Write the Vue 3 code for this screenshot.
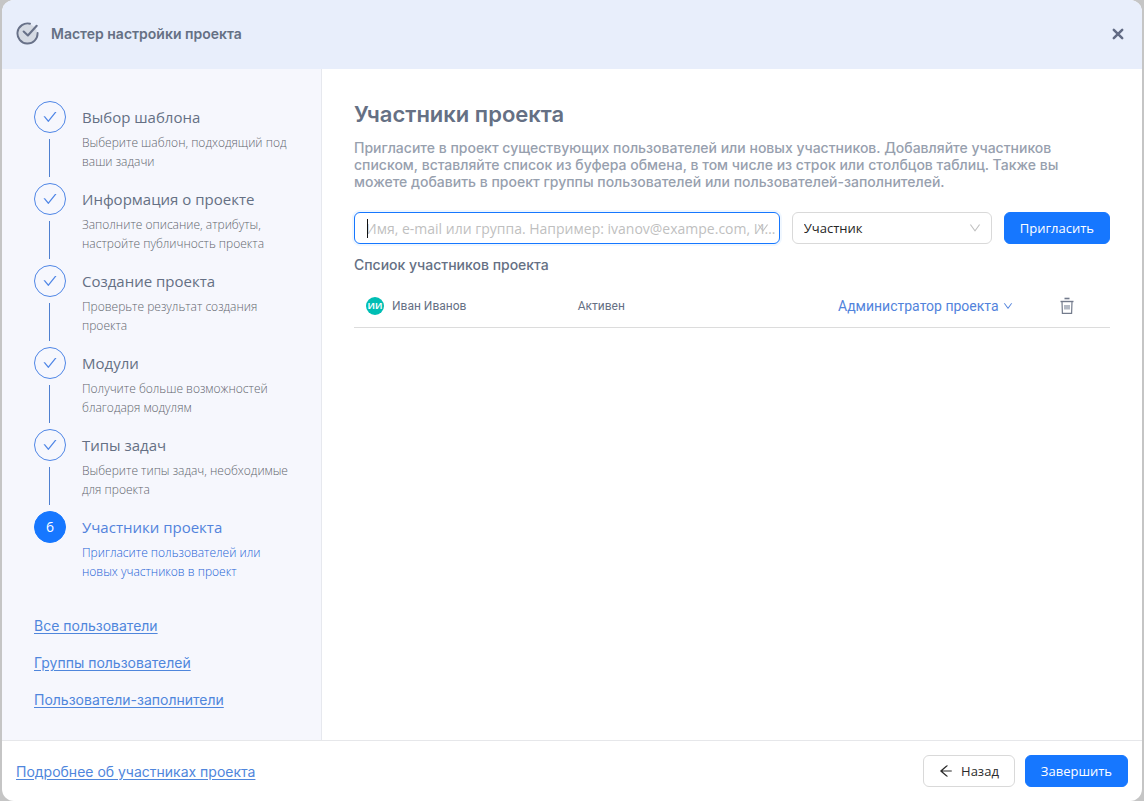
<script setup>
import { ref } from 'vue'

const steps = [
  { title: 'Выбор шаблона', text: 'Выберите шаблон, подходящий под ваши задачи' },
  { title: 'Информация о проекте', text: 'Заполните описание, атрибуты, настройте публичность проекта' },
  { title: 'Создание проекта', text: 'Проверьте результат создания проекта' },
  { title: 'Модули', text: 'Получите больше возможностей благодаря модулям' },
  { title: 'Типы задач', text: 'Выберите типы задач, необходимые для проекта' },
  { title: 'Участники проекта', text: 'Пригласите пользователей или новых участников в проект' }
]
const current = 5
const links = ['Все пользователи', 'Группы пользователей', 'Пользователи-заполнители']
const members = ref([{ initials: 'ИИ', name: 'Иван Иванов', status: 'Активен', role: 'Администратор проекта' }])
const query = ref('')
const role = ref('Участник')
const down = 'M884 256h-75c-5.1 0-9.9 2.5-12.9 6.6L512 654.2 227.9 262.6c-3-4.1-7.8-6.6-12.9-6.6h-75c-6.5 0-10.3 7.4-6.5 12.7l352.6 486.1c12.8 17.6 39 17.6 51.7 0l352.6-486.1c3.9-5.3.1-12.7-6.4-12.7z'
</script>

<template>
  <div class="page">
    <div class="wizard">
      <header class="head">
        <svg class="logo" viewBox="0 0 24 24" aria-hidden="true">
          <circle cx="12" cy="12" r="10" fill="#d5dae3" />
          <path d="M14.6 1.8A10.5 10.5 0 1 0 22.5 11.4" fill="none" stroke="#687188" stroke-width="2" stroke-linecap="round" />
          <path d="M8 10l4.4 4L21.6 4" fill="none" stroke="#687188" stroke-width="2.2" stroke-linecap="round" stroke-linejoin="round" />
        </svg>
        <h1>Мастер настройки проекта</h1>
        <button class="close" type="button" aria-label="Закрыть">
          <svg viewBox="0 0 12 12"><path d="M1.8 1.8l8.4 8.4M10.2 1.8l-8.4 8.4" stroke="#626b84" stroke-width="2.5" stroke-linecap="round" /></svg>
        </button>
      </header>

      <div class="body">
        <aside class="side">
          <ol class="steps">
            <li v-for="(s, i) in steps" :key="s.title" class="step" :class="{ active: i === current }">
              <div class="rail">
                <span class="dot">
                  <svg v-if="i < current" viewBox="64 64 896 896" aria-hidden="true">
                    <path fill="currentColor" d="M912 190h-69.9c-9.8 0-19.1 4.5-25.1 12.2L404.7 724.5 207 474a32 32 0 00-25.1-12.2H112c-6.7 0-10.4 7.7-6.3 12.9l273.9 347c12.8 16.2 37.4 16.2 50.3 0l488.4-618.9c4.1-5.1.4-12.8-6.3-12.8z" />
                  </svg>
                  <template v-else>{{ i + 1 }}</template>
                </span>
                <span v-if="i < steps.length - 1" class="line"></span>
              </div>
              <div class="info">
                <h3>{{ s.title }}</h3>
                <p>{{ s.text }}</p>
              </div>
            </li>
          </ol>
          <nav class="links">
            <a v-for="l in links" :key="l" href="#">{{ l }}</a>
          </nav>
        </aside>

        <main class="main">
          <h2>Участники проекта</h2>
          <p class="lead">Пригласите в проект существующих пользователей или новых участников. Добавляйте участников списком, вставляйте список из буфера обмена, в том числе из строк или столбцов таблиц. Также вы можете добавить в проект группы пользователей или пользователей-заполнителей.</p>
          <form class="invite" @submit.prevent>
            <div class="field search">
              <input v-model="query" type="text" aria-label="Имя, e-mail или группа" placeholder="Имя, e-mail или группа. Например: ivanov@exampe.com, Иван Иванов" />
              <span class="caret"></span>
              <svg class="chev" viewBox="64 64 896 896" aria-hidden="true"><path fill="currentColor" :d="down" /></svg>
            </div>
            <div class="field role">
              <select v-model="role" aria-label="Роль">
                <option>Участник</option>
              </select>
              <svg class="chev" viewBox="64 64 896 896" aria-hidden="true"><path fill="currentColor" :d="down" /></svg>
            </div>
            <button class="btn primary" type="submit">Пригласить</button>
          </form>
          <table class="members">
            <caption>Спсиок участников проекта</caption>
            <tbody>
              <tr v-for="m in members" :key="m.name">
                <td class="c-name"><div class="person"><span class="avatar">{{ m.initials }}</span>{{ m.name }}</div></td>
                <td class="c-status">{{ m.status }}</td>
                <td class="c-role">
                  <div class="pick">
                    <select v-model="m.role" aria-label="Роль участника">
                      <option>Администратор проекта</option>
                    </select>
                    <svg viewBox="64 64 896 896" aria-hidden="true"><path fill="currentColor" :d="down" /></svg>
                  </div>
                </td>
                <td class="c-del">
                  <button class="trash" type="button" aria-label="Удалить">
                    <svg viewBox="0 0 16 18" fill="none" stroke="currentColor">
                      <path d="M5.5 1.5h5" stroke-width="1.6" />
                      <path d="M1.5 4.5h13" stroke-width="1.4" />
                      <path d="M3 4.5l.4 11.8h9.2l.4-11.8" stroke-width="1.2" />
                      <path d="M5 8h6v4.5h-6z" fill="#b4bac5" stroke="none" />
                    </svg>
                  </button>
                </td>
              </tr>
            </tbody>
          </table>
        </main>
      </div>

      <footer class="foot">
        <a href="#">Подробнее об участниках проекта</a>
        <div class="actions">
          <button class="btn" type="button">
            <svg viewBox="64 64 896 896" aria-hidden="true"><path fill="currentColor" d="M872 474H286.9l350.2-304c5.6-4.9 2.2-14-5.2-14h-88.5c-3.9 0-7.6 1.4-10.5 3.9L155 487.8a31.96 31.96 0 000 48.3L535.1 866c1.5 1.3 3.3 2 5.2 2h91.5c7.4 0 10.8-9.2 5.2-14L286.9 550H872c4.4 0 8-3.6 8-8v-60c0-4.4-3.6-8-8-8z" /></svg>
            Назад
          </button>
          <button class="btn primary" type="button">Завершить</button>
        </div>
      </footer>
    </div>
  </div>
</template>

<style>
body {
  margin: 0;
  background: #c5c5c5;
}
</style>

<style scoped>
* {
  box-sizing: border-box;
}
h1, h2, h3, p, ol {
  margin: 0;
  padding: 0;
  font-weight: 400;
}
.page {
  display: flex;
  min-height: 100vh;
  padding: 0 2px;
  font-family: Inter, sans-serif;
  font-size: 14px;
  color: #657084;
}
a {
  color: #4f86dc;
  text-decoration: underline;
  text-underline-offset: 2px;
}
.wizard {
  flex: 1;
  display: flex;
  flex-direction: column;
  overflow: hidden;
  border-radius: 12px;
  background: #fff;
}
.head {
  display: flex;
  align-items: center;
  gap: 12px;
  height: 69px;
  padding: 0 16px 2px 14px;
  background: #e8eefb;
}
.logo {
  width: 23px;
  height: 23px;
}
.head h1 {
  flex: 1;
  font-size: 14px;
  font-weight: 600;
}
.close {
  display: flex;
  padding: 2px;
  border: 0;
  background: none;
}
.close svg {
  width: 12px;
  height: 12px;
}
.body {
  flex: 1;
  display: flex;
}
.side {
  flex: 0 0 320px;
  padding: 32px 24px 16px 32px;
  border-right: 1px solid #e6e8ee;
  background: #f6f7fd;
}
.steps {
  list-style: none;
}
.step {
  display: flex;
  gap: 16px;
  min-height: 82px;
}
.rail {
  display: flex;
  flex-direction: column;
  gap: 6px;
  width: 32px;
  padding-bottom: 6px;
}
.dot {
  display: flex;
  align-items: center;
  justify-content: center;
  width: 32px;
  height: 32px;
  border: 1px solid #4f86e6;
  border-radius: 50%;
  font: 14px/30px "Open Sans", sans-serif;
  color: #4f86e6;
}
.dot svg {
  width: 14px;
  height: 14px;
}
.line {
  flex: 1;
  width: 1px;
  margin-left: 15px;
  background: #4f80d0;
}
.info {
  flex: 1;
  font-family: "Open Sans", sans-serif;
}
.info h3 {
  font-size: 15px;
  line-height: 32px;
}
.info p {
  font-size: 12px;
  font-weight: 300;
  line-height: 19px;
  color: #62666e;
}
.active .dot {
  border-color: #1677ff;
  background: #1677ff;
  color: #fff;
}
.active h3 {
  color: #5283dc;
}
.active p {
  color: #2563d6;
}
.links {
  display: flex;
  flex-direction: column;
  align-items: flex-start;
  margin-top: 14px;
  line-height: 37px;
}
.main {
  flex: 1;
  min-width: 0;
  padding: 32px;
}
.main h2 {
  font-size: 22px;
  font-weight: 600;
  line-height: 26px;
}
.lead {
  margin-top: 12px;
  font-weight: 500;
  line-height: 17px;
  color: #97a0ae;
}
.invite {
  display: flex;
  gap: 12px;
  margin-top: 22px;
}
.field {
  position: relative;
}
.search {
  flex: 1;
  font: 14px/20px "Open Sans", sans-serif;
}
.role {
  flex: 0 0 200px;
  font: 13px/20px "Open Sans", sans-serif;
}
.field input,
.field select {
  display: block;
  width: 100%;
  height: 32px;
  padding: 0 11px;
  border: 1px solid #d9d9d9;
  border-radius: 6px;
  outline: 0;
  background: #fff;
  font: inherit;
  color: #262626;
  appearance: none;
}
.field input {
  padding-right: 3px;
  border-color: #1677ff;
  box-shadow: 0 0 0 2px #f0f7ff;
  text-overflow: ellipsis;
}
.field input::placeholder {
  color: #bfbfbf;
  opacity: 1;
}
.caret {
  position: absolute;
  top: 7px;
  left: 13px;
  width: 1px;
  height: 19px;
  background: #111;
}
.chev {
  position: absolute;
  top: 10px;
  right: 11px;
  width: 12px;
  height: 12px;
  color: #bfbfbf;
  pointer-events: none;
}
.btn {
  display: flex;
  align-items: center;
  gap: 8px;
  height: 32px;
  padding: 0 15px;
  border: 1px solid #d9d9d9;
  border-radius: 6px;
  background: #fff;
  font: 13px/20px "Open Sans", sans-serif;
  color: #2b2b2b;
}
.btn svg {
  width: 14px;
  height: 14px;
}
.btn.primary {
  border-color: #1677ff;
  background: #1677ff;
  color: #fff;
  font-weight: 500;
}
.members {
  width: 100%;
  border-collapse: collapse;
  font: 12px/20px Roboto, sans-serif;
  table-layout: fixed;
}
.members caption {
  padding: 11px 0 10px;
  font: 500 14px/20px Inter, sans-serif;
  text-align: left;
}
.members td {
  height: 42px;
  padding: 0 0 0 12px;
  border-bottom: 1px solid #dcdcdc;
}
.c-name {
  width: 28%;
}
.c-role {
  width: 221px;
}
.c-del {
  width: 63px;
}
.person {
  display: flex;
  align-items: center;
  gap: 8px;
}
.avatar {
  width: 18px;
  height: 18px;
  border-radius: 50%;
  background: #00beb4;
  font: 700 9px/18px "Open Sans", sans-serif;
  text-align: center;
  color: #fff;
}
.pick {
  display: flex;
  align-items: center;
  gap: 4px;
  color: #5283dc;
}
.pick select {
  padding: 0;
  border: 0;
  background: none;
  font: 14px/20px Roboto, sans-serif;
  color: inherit;
  appearance: none;
}
.pick svg {
  width: 10px;
  height: 10px;
}
.trash {
  display: flex;
  padding: 0;
  border: 0;
  background: none;
  color: #737b8c;
}
.trash svg {
  width: 16px;
  height: 18px;
}
.foot {
  display: flex;
  align-items: center;
  justify-content: space-between;
  min-height: 61px;
  padding: 0 14px;
  border-top: 1px solid #e6e7ea;
}
.actions {
  display: flex;
  gap: 10px;
}
</style>
